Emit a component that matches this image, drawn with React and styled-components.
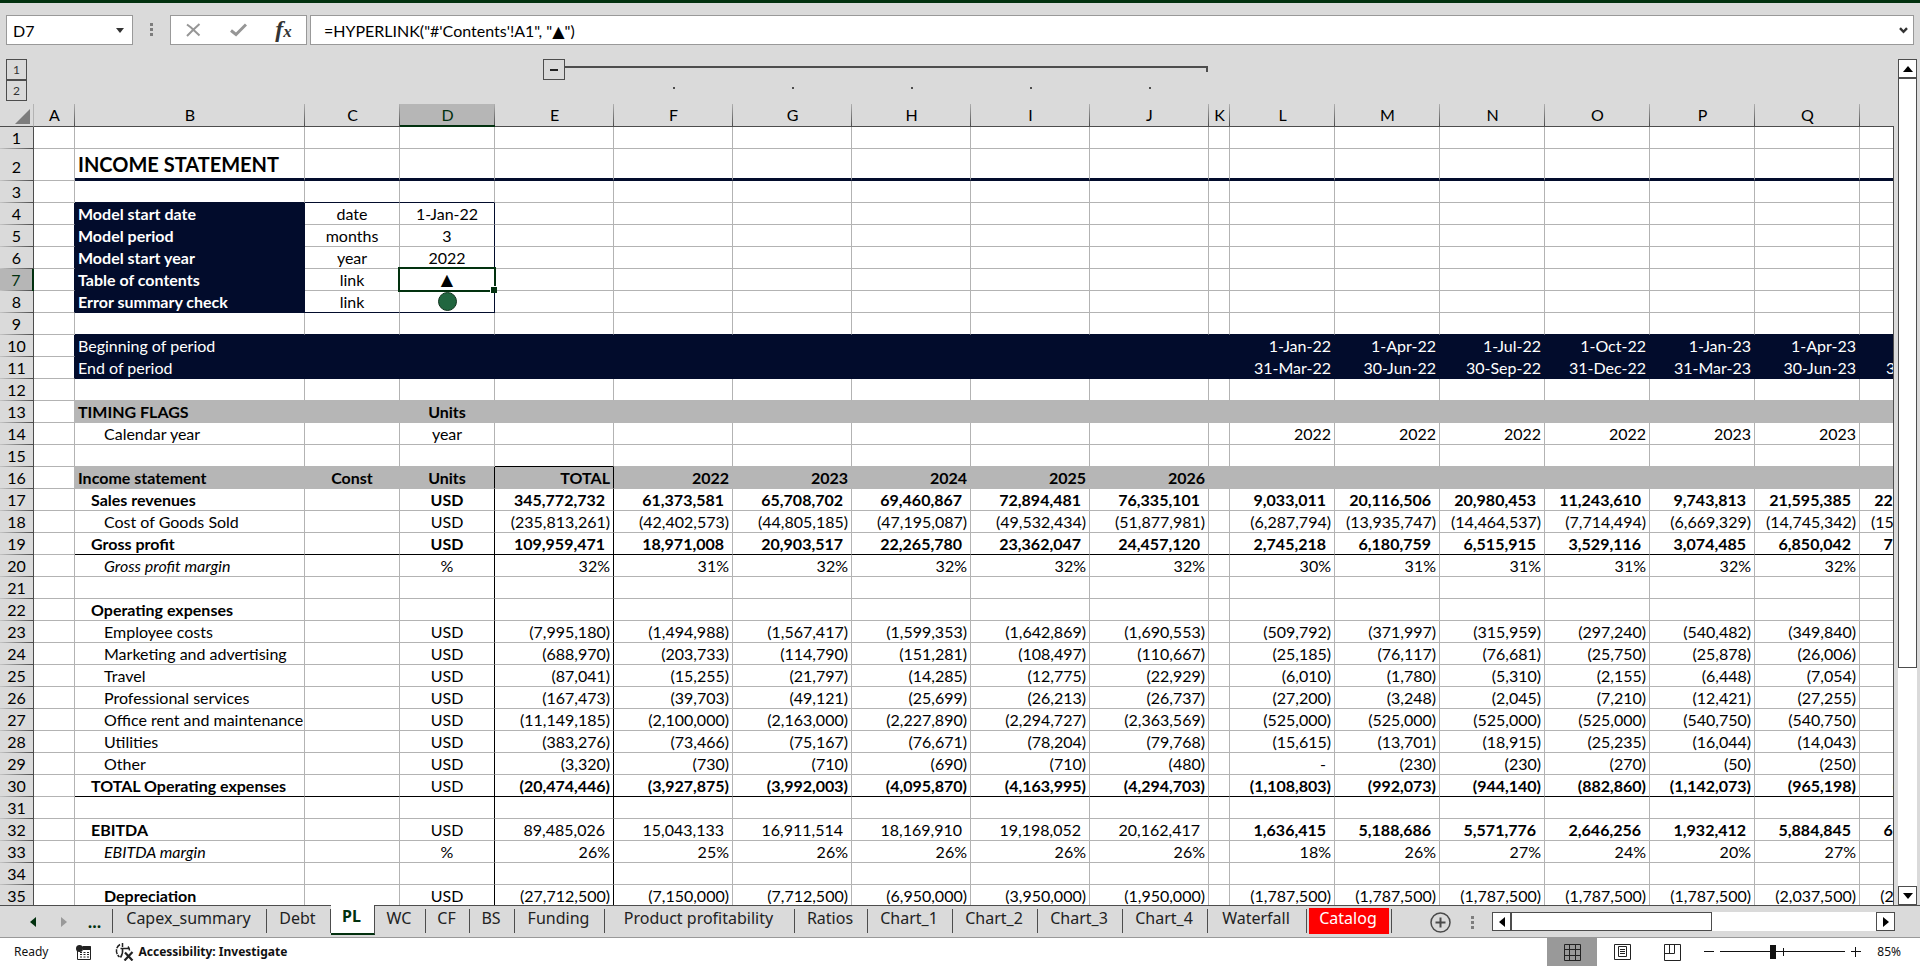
import styled, { createGlobalStyle, css } from "styled-components";

const navy = "#020c2c";
const green = "#02310f";
const chrome = "#dadada";
const band = "#b6b6b6";
const line = "#b3b3b3";
const edge = "#4d4d4d";

const columns = [
  { id: "A", width: 41 },
  { id: "B", width: 230 },
  { id: "C", width: 95 },
  { id: "D", width: 95 },
  { id: "E", width: 119 },
  { id: "F", width: 119 },
  { id: "G", width: 119 },
  { id: "H", width: 119 },
  { id: "I", width: 119 },
  { id: "J", width: 119 },
  { id: "K", width: 21 },
  { id: "L", width: 105 },
  { id: "M", width: 105 },
  { id: "N", width: 105 },
  { id: "O", width: 105 },
  { id: "P", width: 105 },
  { id: "Q", width: 105 },
  { id: "R", width: 105 },
];
const headWidth = 34;
const tableWidth = columns.reduce((sum, c) => sum + c.width, headWidth);

const yearColumns = ["E", "F", "G", "H", "I", "J"];
const quarterColumns = ["L", "M", "N", "O", "P", "Q", "R"];

const rows = {
  2: { label: "INCOME STATEMENT", kind: "title" },
  4: { label: "Model start date", kind: "info", constant: "date", unit: "1-Jan-22" },
  5: { label: "Model period", kind: "info", constant: "months", unit: "3" },
  6: { label: "Model start year", kind: "info", constant: "year", unit: "2022" },
  7: { label: "Table of contents", kind: "info", constant: "link", unit: "contents" },
  8: { label: "Error summary check", kind: "info", constant: "link", unit: "check" },
  10: {
    label: "Beginning of period",
    kind: "period",
    quarters: "1-Jan-22 1-Apr-22 1-Jul-22 1-Oct-22 1-Jan-23 1-Apr-23 1-Jul-23",
  },
  11: {
    label: "End of period",
    kind: "period",
    quarters: "31-Mar-22 30-Jun-22 30-Sep-22 31-Dec-22 31-Mar-23 30-Jun-23 30-Sep-23",
  },
  13: { label: "TIMING FLAGS", kind: "band", unit: "Units" },
  14: {
    label: "Calendar year",
    indent: 2,
    unit: "year",
    plain: true,
    quarters: "2022 2022 2022 2022 2023 2023 2023",
  },
  16: {
    label: "Income statement",
    kind: "band",
    constant: "Const",
    unit: "Units",
    plain: true,
    years: "TOTAL 2022 2023 2024 2025 2026",
  },
  17: {
    label: "Sales revenues",
    indent: 1,
    bold: "all",
    unit: "USD",
    years: "345,772,732 61,373,581 65,708,702 69,460,867 72,894,481 76,335,101",
    quarters: "9,033,011 20,116,506 20,980,453 11,243,610 9,743,813 21,595,385 22,513,924",
  },
  18: {
    label: "Cost of Goods Sold",
    indent: 2,
    unit: "USD",
    years: "(235,813,261) (42,402,573) (44,805,185) (47,195,087) (49,532,434) (51,877,981)",
    quarters: "(6,287,794) (13,935,747) (14,464,537) (7,714,494) (6,669,329) (14,745,342) (15,306,204)",
  },
  19: {
    label: "Gross profit",
    indent: 1,
    bold: "all",
    unit: "USD",
    rule: true,
    years: "109,959,471 18,971,008 20,903,517 22,265,780 23,362,047 24,457,120",
    quarters: "2,745,218 6,180,759 6,515,915 3,529,116 3,074,485 6,850,042 7,207,720",
  },
  20: {
    label: "Gross profit margin",
    indent: 2,
    italic: true,
    unit: "%",
    years: "32% 31% 32% 32% 32% 32%",
    quarters: "30% 31% 31% 31% 32% 32% 32%",
  },
  22: { label: "Operating expenses", indent: 1, bold: "label" },
  23: {
    label: "Employee costs",
    indent: 2,
    unit: "USD",
    years: "(7,995,180) (1,494,988) (1,567,417) (1,599,353) (1,642,869) (1,690,553)",
    quarters: "(509,792) (371,997) (315,959) (297,240) (540,482) (349,840) (380,100)",
  },
  24: {
    label: "Marketing and advertising",
    indent: 2,
    unit: "USD",
    years: "(688,970) (203,733) (114,790) (151,281) (108,497) (110,667)",
    quarters: "(25,185) (76,117) (76,681) (25,750) (25,878) (26,006) (26,135)",
  },
  25: {
    label: "Travel",
    indent: 2,
    unit: "USD",
    years: "(87,041) (15,255) (21,797) (14,285) (12,775) (22,929)",
    quarters: "(6,010) (1,780) (5,310) (2,155) (6,448) (7,054) (4,210)",
  },
  26: {
    label: "Professional services",
    indent: 2,
    unit: "USD",
    years: "(167,473) (39,703) (49,121) (25,699) (26,213) (26,737)",
    quarters: "(27,200) (3,248) (2,045) (7,210) (12,421) (27,255) (2,106)",
  },
  27: {
    label: "Office rent and maintenance",
    indent: 2,
    unit: "USD",
    years: "(11,149,185) (2,100,000) (2,163,000) (2,227,890) (2,294,727) (2,363,569)",
    quarters: "(525,000) (525,000) (525,000) (525,000) (540,750) (540,750) (540,750)",
  },
  28: {
    label: "Utilities",
    indent: 2,
    unit: "USD",
    years: "(383,276) (73,466) (75,167) (76,671) (78,204) (79,768)",
    quarters: "(15,615) (13,701) (18,915) (25,235) (16,044) (14,043) (19,388)",
  },
  29: {
    label: "Other",
    indent: 2,
    unit: "USD",
    years: "(3,320) (730) (710) (690) (710) (480)",
    quarters: "- (230) (230) (270) (50) (250) (160)",
  },
  30: {
    label: "TOTAL Operating expenses",
    indent: 1,
    bold: "numbers",
    unit: "USD",
    rule: true,
    years: "(20,474,446) (3,927,875) (3,992,003) (4,095,870) (4,163,995) (4,294,703)",
    quarters: "(1,108,803) (992,073) (944,140) (882,860) (1,142,073) (965,198) (972,849)",
  },
  32: {
    label: "EBITDA",
    indent: 1,
    bold: "quarters",
    unit: "USD",
    years: "89,485,026 15,043,133 16,911,514 18,169,910 19,198,052 20,162,417",
    quarters: "1,636,415 5,188,686 5,571,776 2,646,256 1,932,412 5,884,845 6,234,871",
  },
  33: {
    label: "EBITDA margin",
    indent: 2,
    italic: true,
    unit: "%",
    years: "26% 25% 26% 26% 26% 26%",
    quarters: "18% 26% 27% 24% 20% 27% 28%",
  },
  35: {
    label: "Depreciation",
    indent: 2,
    bold: "label",
    unit: "USD",
    years: "(27,712,500) (7,150,000) (7,712,500) (6,950,000) (3,950,000) (1,950,000)",
    quarters: "(1,787,500) (1,787,500) (1,787,500) (1,787,500) (1,787,500) (2,037,500) (2,037,500)",
  },
};
const rowNumbers = Array.from({ length: 35 }, (_, i) => i + 1);

const tabs = [
  { name: "Capex_summary", width: 154 },
  { name: "Debt", width: 64 },
  { name: "PL", width: 44, active: true },
  { name: "WC", width: 51 },
  { name: "CF", width: 44 },
  { name: "BS", width: 45 },
  { name: "Funding", width: 90 },
  { name: "Product profitability", width: 190 },
  { name: "Ratios", width: 73 },
  { name: "Chart_1", width: 85 },
  { name: "Chart_2", width: 85 },
  { name: "Chart_3", width: 85 },
  { name: "Chart_4", width: 85 },
  { name: "Waterfall", width: 99 },
  { name: "Catalog", width: 85, red: true },
];

const textOf = (row, col) => {
  if (!row) return "";
  if (col === "B") return row.label;
  if (col === "C") return row.constant;
  if (col === "D") return row.unit;
  const y = yearColumns.indexOf(col);
  if (y >= 0) return row.years?.split(" ")[y];
  const q = quarterColumns.indexOf(col);
  if (q >= 0) return row.quarters?.split(" ")[q];
  return "";
};

const isBold = (row, col) => {
  if (!row) return false;
  if (row.kind === "title" || row.kind === "band") return true;
  if (row.kind === "info") return col === "B";
  if (col === "B") return Boolean(row.bold);
  if (row.bold === "all") return true;
  if (row.bold === "numbers") return col !== "D";
  if (row.bold === "quarters") return quarterColumns.includes(col);
  return false;
};

const fillOf = (n, col) => {
  if (col === "A") return null;
  const kind = rows[n]?.kind;
  if (kind === "period") return navy;
  if (kind === "band") return band;
  if (kind === "info" && col === "B") return navy;
  return null;
};

// Bottom and right lines of a cell: a box or a rule wins over a fill, a fill over the grid
const bottomOf = (n, col) => {
  if (col === "A") return line;
  if (rows[n]?.rule) return "#000";
  if (n === 15 && col === "E") return "#000";
  if ((n === 3 || n === 8) && ["B", "C", "D"].includes(col)) return navy;
  return fillOf(n, col) || fillOf(n + 1, col) || line;
};

const rightOf = (n, col) => {
  if (n >= 16 && (col === "D" || col === "E")) return "#000";
  if (n >= 4 && n <= 8 && col === "D") return navy;
  if (col === "A") return fillOf(n, "B") || line;
  return fillOf(n, col) || line;
};

const padOf = (row, col, text) => {
  if (col === "B") return [3, 16, 29][row?.indent || 0];
  if (row?.plain || row?.kind === "period" || !text) return 3;
  return text.endsWith(")") || text.endsWith("%") ? 3 : 8;
};

const App = () => (
  <>
    <GlobalStyle />
    <Window>
      <TitleEdge />
      <FormulaBar>
        <NameBox>
          <NameInput aria-label="Name box" defaultValue="D7" />
          <PlainButton aria-label="Choose a name">
            <Caret viewBox="0 0 8 5"><path d="M0 0h8L4 5z" /></Caret>
          </PlainButton>
        </NameBox>
        <Grip />
        <EntryButtons>
          <PlainButton aria-label="Cancel">
            <svg width="15" height="14" viewBox="0 0 15 14" fill="none" stroke="#969696" strokeWidth="2">
              <path d="M1 1.500l4 3 8.500 8M13.500 1L7 7l-6 6" />
            </svg>
          </PlainButton>
          <PlainButton aria-label="Enter">
            <svg width="17" height="14" viewBox="0 0 17 14" fill="none" stroke="#969696" strokeWidth="3">
              <path d="M1 7.500l5 4L16 1.500" />
            </svg>
          </PlainButton>
          <FxButton aria-label="Insert function">f<small>x</small></FxButton>
        </EntryButtons>
        <FormulaBox>
          <FormulaInput aria-label="Formula" defaultValue={`=HYPERLINK("#'Contents'!A1", "▲")`} />
          <PlainButton aria-label="Expand formula bar">
            <svg width="9" height="7" viewBox="0 0 9 7" fill="none" stroke="#333" strokeWidth="2.400">
              <path d="M1 1.200l3.500 3.600L8 1.200" />
            </svg>
          </PlainButton>
        </FormulaBox>
      </FormulaBar>

      <Workspace>
        <Sheet>
          <Outline>
            <Levels>
              <LevelButton>1</LevelButton>
              <LevelButton>2</LevelButton>
            </Levels>
            <GroupBar>
              <CollapseButton aria-label="Collapse group" />
              <GroupLine />
            </GroupBar>
            <GroupDots>
              {yearColumns.slice(1).map((id) => (
                <GroupDot key={id} />
              ))}
            </GroupDots>
          </Outline>
          <Viewport>
            <Table>
              <colgroup>
                <Column $width={headWidth} />
                {columns.map((c) => (
                  <Column key={c.id} $width={c.width} />
                ))}
              </colgroup>
              <thead>
                <tr>
                  <Corner aria-label="Select all">
                    <svg width="15" height="15" viewBox="0 0 15 15"><path d="M15 0v15H0z" fill="#7d7d7d" /></svg>
                  </Corner>
                  {columns.map((c) => (
                    <ColumnHead key={c.id} scope="col" $selected={c.id === "D"}>
                      {c.id}
                    </ColumnHead>
                  ))}
                </tr>
              </thead>
              <tbody>
                {rowNumbers.map((n) => (
                  <SheetRow key={n} n={n} row={rows[n]} />
                ))}
              </tbody>
            </Table>
          </Viewport>
        </Sheet>
        <VerticalScroll>
          <ArrowButton aria-label="Scroll up">
            <svg width="10" height="6" viewBox="0 0 10 6"><path d="M5 0l5 6H0z" /></svg>
          </ArrowButton>
          <VerticalTrack>
            <VerticalThumb />
          </VerticalTrack>
          <ArrowButton aria-label="Scroll down">
            <svg width="10" height="6" viewBox="0 0 10 6"><path d="M0 0h10L5 6z" /></svg>
          </ArrowButton>
        </VerticalScroll>
      </Workspace>

      <TabBar>
        <TabNav>
          <PlainButton aria-label="Previous sheets">
            <svg width="6" height="10" viewBox="0 0 6 10"><path d="M6 0v10L0 5z" fill={green} /></svg>
          </PlainButton>
          <PlainButton aria-label="Next sheets">
            <svg width="6" height="10" viewBox="0 0 6 10"><path d="M0 0v10l6-5z" fill="#999" /></svg>
          </PlainButton>
          <MoreButton aria-label="More sheets">...</MoreButton>
        </TabNav>
        <TabList>
          {tabs.map((t) => (
            <TabItem key={t.name} $width={t.width} $active={t.active}>
              <TabButton $active={t.active} $red={t.red}>{t.name}</TabButton>
            </TabItem>
          ))}
        </TabList>
        <AddButton aria-label="New sheet">
          <svg width="21" height="21" viewBox="0 0 21 21" fill="none" stroke="#4a4a4a">
            <circle cx="10.500" cy="10.500" r="9.500" strokeWidth="1.500" />
            <path d="M10.500 5.500v10M5.500 10.500h10" strokeWidth="2" />
          </svg>
        </AddButton>
        <Grip $low />
        <HorizontalScroll>
          <ArrowButton aria-label="Scroll left">
            <svg width="6" height="10" viewBox="0 0 6 10"><path d="M6 0v10L0 5z" /></svg>
          </ArrowButton>
          <HorizontalTrack>
            <HorizontalThumb />
          </HorizontalTrack>
          <ArrowButton aria-label="Scroll right">
            <svg width="6" height="10" viewBox="0 0 6 10"><path d="M0 0v10l6-5z" /></svg>
          </ArrowButton>
        </HorizontalScroll>
      </TabBar>

      <StatusBar>
        <StatusText>Ready</StatusText>
        <PlainButton aria-label="Record macro">
          <svg width="16" height="15" viewBox="0 0 16 15" fill="none" stroke="#222">
            <path d="M1.500 6v8.500h13v-13H7" />
            <path d="M6 2.500h9M7 4h8" strokeWidth="2" />
            <path d="M4 7.500h2m1.500 0h2m1.500 0h2M4 9.500h2m1.500 0h2m1.500 0h2M4 12h2m1.500 0h2m1.500 0h2" />
            <circle cx="3.500" cy="3.500" r="3.500" fill="#222" stroke="none" />
          </svg>
        </PlainButton>
        <AccessibilityButton>
          <svg width="20" height="18" viewBox="0 0 20 18" fill="none" stroke="#222" strokeWidth="1.500">
            <path d="M5 1.500C.5 4 .2 10.500 4.500 14" strokeDasharray="5 1" />
            <path d="M7.500 0v4M5.500 5.500h8M7.500 5.500c.5 3 0 6-2 9M13 3.500c1 1 1.500 2 1.500 4" />
            <path d="M10 9.500l7.500 8M17.500 9l-8 8.500" strokeWidth="2.200" />
          </svg>
          Accessibility: Investigate
        </AccessibilityButton>
        <ViewButtons>
          <ViewButton $active aria-label="Normal">
            <svg width="17" height="17" viewBox="0 0 17 17" fill="none" stroke="#222">
              <path d="M.5.5h16v16H.5zM5.500.5v16M11.500.5v16M.5 5.500h16M.5 11.500h16" />
            </svg>
          </ViewButton>
          <ViewButton aria-label="Page layout">
            <svg width="17" height="16" viewBox="0 0 17 16" fill="none" stroke="#222">
              <path d="M.5.5h16v15H.5zM4.500 2.500h8v10h-8zM6 5.500h5M6 7.500h5M6 9.500h5" />
            </svg>
          </ViewButton>
          <ViewButton aria-label="Page break preview">
            <svg width="17" height="17" viewBox="0 0 17 17" fill="none" stroke="#222">
              <path d="M.5.5h16v16H.5zM.5 9.500h10v-9M5.500.5v9" />
            </svg>
          </ViewButton>
        </ViewButtons>
        <PlainButton aria-label="Zoom out">
          <svg width="10" height="10" viewBox="0 0 10 10" stroke="#111"><path d="M0 4.500h10" /></svg>
        </PlainButton>
        <ZoomSlider type="range" aria-label="Zoom" min="10" max="190" defaultValue="85" />
        <PlainButton aria-label="Zoom in">
          <svg width="10" height="10" viewBox="0 0 10 10" stroke="#111"><path d="M0 4.500h10M4.500 0v10" /></svg>
        </PlainButton>
        <ZoomValue>85%</ZoomValue>
      </StatusBar>
    </Window>
  </>
);

const SheetRow = ({ n, row }) => (
  <tr>
    <RowHead scope="row" $selected={n === 7} $tall={n === 2}>{n}</RowHead>
    {columns.map(({ id }) => {
      const text = textOf(row, id);
      return (
        <Cell
          key={id}
          $align={id === "B" ? "left" : id === "C" || id === "D" ? "center" : "right"}
          $pad={padOf(row, id, text)}
          $bold={isBold(row, id)}
          $italic={row?.italic && id === "B"}
          $fill={fillOf(n, id)}
          $bottom={bottomOf(n, id)}
          $right={rightOf(n, id)}
          $title={n === 2 && id !== "A"}
        >
          <CellContent text={text} />
        </Cell>
      );
    })}
  </tr>
);

const CellContent = ({ text }) => {
  if (text === "contents") {
    return (
      <>
        <CellLink href="#Contents">▲</CellLink>
        <Selection />
      </>
    );
  }
  if (text === "check") {
    return (
      <CellLink href="#Checks" aria-label="Error summary check">
        <svg width="19" height="19" viewBox="0 0 19 19">
          <circle cx="9.500" cy="9.500" r="9" fill="#21663f" stroke="#12351f" />
        </svg>
      </CellLink>
    );
  }
  return text || null;
};

export default App;

const GlobalStyle = createGlobalStyle`
  * {
    box-sizing: border-box;
  }
  body {
    margin: 0;
    background: ${chrome};
    color: #000;
    font: 16px/19px Lato, "DejaVu Sans", sans-serif;
  }
  button, input {
    font: inherit;
    color: inherit;
  }
  svg {
    display: block;
  }
`;

const Window = styled.div`
  display: flex;
  flex-direction: column;
  height: 100vh;
  overflow: hidden;
`;

const TitleEdge = styled.div`
  flex: none;
  height: 3px;
  background: ${green};
`;

const PlainButton = styled.button`
  display: flex;
  align-items: center;
  justify-content: center;
  padding: 0;
  border: 0;
  background: none;
`;

/* Formula bar */
const FormulaBar = styled.div`
  display: flex;
  flex: none;
  height: 42px;
  padding: 12px 6px 0;
`;

const boxed = css`
  display: flex;
  height: 30px;
  border: 1px solid #999;
  background: #fff;
`;

const NameBox = styled.div`
  ${boxed}
  width: 127px;
  padding: 0 8px 0 6px;
`;

const NameInput = styled.input`
  flex: 1;
  min-width: 0;
  padding: 0;
  border: 0;
  background: none;
`;

const Caret = styled.svg`
  width: 8px;
  height: 5px;
  fill: #333;
`;

const Grip = styled.span`
  flex: none;
  width: 3px;
  height: 13px;
  margin: ${(p) => (p.$low ? "10px 18px 0 auto" : "8px 17px 0")};
  background: repeating-linear-gradient(#7d7d7d 0 3px, transparent 3px 5px);
`;

const EntryButtons = styled.div`
  ${boxed}
  width: 137px;
  margin-right: 3px;

  button {
    flex: 1;
  }
`;

const FxButton = styled(PlainButton)`
  align-items: baseline;
  font: italic bold 24px/26px "Liberation Serif", serif;
  color: #333;

  small {
    font-size: 17px;
  }
`;

const FormulaBox = styled.div`
  ${boxed}
  flex: 1;
  padding: 0 5px 0 13px;
`;

const FormulaInput = styled.input`
  flex: 1;
  padding: 0;
  border: 0;
  background: none;
  outline: none;
`;

/* Sheet */
const Workspace = styled.div`
  display: flex;
  flex: 1;
  gap: 4px;
  min-height: 0;
  padding-right: 3px;
`;

const Sheet = styled.div`
  display: flex;
  flex: 1;
  flex-direction: column;
  min-width: 0;
  overflow: hidden;
`;

const Outline = styled.div`
  display: grid;
  flex: none;
  grid-template-columns: ${headWidth}px ${columns.map((c) => `${c.width}px`).join(" ")};
  grid-template-rows: 21px 24px;
  padding-top: 14px;
`;

const Levels = styled.div`
  grid-area: 1 / 1 / 3 / 2;
  padding-left: 6px;
`;

const LevelButton = styled.button`
  display: block;
  width: 21px;
  height: 21px;
  padding: 0;
  border: 1px solid ${edge};
  background: ${chrome};
  color: #333;
  font-size: 12px;
`;

const GroupBar = styled.div`
  display: flex;
  grid-area: 1 / 6 / 2 / 12;
  padding: 0 1px 0 48px;
`;

const CollapseButton = styled.button`
  display: flex;
  align-items: center;
  justify-content: center;
  width: 22px;
  height: 21px;
  padding: 0;
  border: 1px solid ${edge};
  background: ${chrome};

  &::before {
    content: "";
    width: 8px;
    height: 2px;
    background: #222;
  }
`;

const GroupLine = styled.span`
  flex: 1;
  height: 6px;
  margin-top: 7px;
  border: solid ${edge};
  border-width: 2px 2px 0 0;
`;

const GroupDots = styled.div`
  display: flex;
  grid-area: 2 / 7 / 3 / 12;
  justify-content: space-around;
  padding-top: 7px;
`;

const GroupDot = styled.span`
  width: 2px;
  height: 2px;
  background: ${edge};
`;

const Viewport = styled.div`
  position: relative;
  flex: 1;
  min-height: 0;
  overflow: hidden;

  &::after {
    content: "";
    position: absolute;
    top: 22px;
    right: 0;
    bottom: 0;
    width: 1px;
    background: ${edge};
  }
`;

const Table = styled.table`
  width: ${tableWidth}px;
  table-layout: fixed;
  border-spacing: 0;
`;

const Column = styled.col`
  width: ${(p) => p.$width}px;
`;

const Corner = styled.td`
  height: 23px;
  padding: 4px 3px 2px 15px;
  border-right: 1px solid ${line};
  border-bottom: 1px solid ${edge};
`;

const ColumnHead = styled.th`
  height: 23px;
  padding: 1px 1px 0;
  border-bottom: ${(p) => (p.$selected ? `2px solid ${green}` : `1px solid ${edge}`)};
  background: linear-gradient(#b0b0b0, ${edge}) right / 1px 100% no-repeat ${(p) => (p.$selected ? band : chrome)};
  color: ${(p) => (p.$selected ? green : "#000")};
  font-weight: normal;
  vertical-align: top;
`;

const RowHead = styled.th`
  height: ${(p) => (p.$tall ? 32 : 22)}px;
  padding: ${(p) => (p.$tall ? "0 0 5px" : "1px 0 0")};
  border-right: ${(p) => (p.$selected ? `2px solid ${green}` : `1px solid ${edge}`)};
  background: linear-gradient(90deg, #c4c4c4, ${edge}) bottom / 100% 1px no-repeat ${(p) => (p.$selected ? band : chrome)};
  color: ${(p) => (p.$selected ? green : "#000")};
  font-weight: normal;
  vertical-align: ${(p) => (p.$tall ? "bottom" : "top")};
`;

const Cell = styled.td`
  position: relative;
  height: 22px;
  padding: 1px ${(p) => (p.$align === "right" ? p.$pad : 0)}px 0 ${(p) => (p.$align === "left" ? p.$pad : 0)}px;
  border-right: 1px solid ${(p) => p.$right};
  border-bottom: 1px solid ${(p) => p.$bottom};
  background: ${(p) => p.$fill || "#fff"};
  color: ${(p) => (p.$fill === navy ? "#fff" : "#000")};
  font-weight: ${(p) => (p.$bold ? 700 : 400)};
  font-style: ${(p) => (p.$italic ? "italic" : "normal")};
  text-align: ${(p) => p.$align};
  vertical-align: top;
  white-space: nowrap;

  ${(p) =>
    p.$title &&
    css`
      padding-bottom: 2px;
      border-bottom: 3px solid ${navy};
      font-size: 20px;
      line-height: 24px;
      vertical-align: bottom;
    `}
`;

const CellLink = styled.a`
  display: flex;
  justify-content: center;
  height: 19px;
  color: #000;
  font-family: "DejaVu Sans", sans-serif;
  text-decoration: none;

  svg {
    flex: none;
  }
`;

const Selection = styled.span`
  position: absolute;
  inset: -2px;
  z-index: 1;
  border: 2px solid ${green};

  &::after {
    content: "";
    position: absolute;
    right: -3px;
    bottom: -3px;
    width: 6px;
    height: 6px;
    border: solid #fff;
    border-width: 1px 0 0 1px;
    background: ${green};
  }
`;

/* Scroll bars */
const VerticalScroll = styled.div`
  display: flex;
  flex: none;
  flex-direction: column;
  width: 19px;
  padding-top: 14px;
`;

const ArrowButton = styled.button`
  display: flex;
  flex: none;
  align-items: center;
  justify-content: center;
  width: 19px;
  height: 19px;
  padding: 0;
  border: 1px solid ${edge};
  background: #fff;
`;

const VerticalTrack = styled.div`
  flex: 1;
  background: #fff;
`;

const VerticalThumb = styled.div`
  height: 73%;
  border: 1px solid ${edge};
  background: #fff;
`;

/* Sheet tabs */
const TabBar = styled.div`
  display: flex;
  flex: none;
  height: 33px;
  border-top: 1px solid ${edge};
  border-bottom: 1px solid #999;
`;

const TabNav = styled.div`
  display: flex;
  flex: none;
  width: 113px;
  height: 24px;
  margin-top: 3px;
  padding-left: 17px;
  border-right: 1px solid ${edge};
  font-family: "Noto Sans", sans-serif;

  button {
    width: 31px;
    height: 26px;
  }
`;

const MoreButton = styled(PlainButton)`
  color: ${green};
  font-weight: bold;
`;

const TabList = styled.ul`
  display: flex;
  min-width: 0;
  margin: 0;
  padding: 0;
  list-style: none;
`;

const TabItem = styled.li`
  display: flex;
  flex: none;
  align-items: center;
  width: ${(p) => p.$width}px;
  height: 24px;
  margin-top: 3px;
  border-right: 1px solid ${edge};

  ${(p) =>
    p.$active &&
    css`
      height: 30px;
      margin-top: -1px;
      background: #fff;
      border-bottom: 2px solid ${green};
    `}
`;

const TabButton = styled.button`
  flex: 1;
  height: 26px;
  margin: 0 2px;
  padding: 0 2px 6px 0;
  border: 0;
  background: ${(p) => (p.$red ? "#f00" : "none")};
  color: ${(p) => (p.$red ? "#fff" : p.$active ? green : "#222")};
  font: ${(p) => (p.$active ? "bold" : "normal")} 16px/20px "Noto Sans", sans-serif;
  white-space: nowrap;
`;

const AddButton = styled(PlainButton)`
  flex: none;
  width: 21px;
  height: 21px;
  margin: 6px 0 0 38px;
`;

const HorizontalScroll = styled.div`
  display: flex;
  flex: none;
  width: 403px;
  height: 19px;
  margin: 6px 25px 0 0;
`;

const HorizontalTrack = styled.div`
  flex: 1;
  background: #fff;
`;

const HorizontalThumb = styled.div`
  width: 55%;
  height: 100%;
  border: 1px solid ${edge};
`;

/* Status bar */
const StatusBar = styled.div`
  display: flex;
  flex: none;
  align-items: center;
  height: 28px;
  padding: 0 19px 0 14px;
  background: #fff;
  color: #111;
  font: 12px/16px "Noto Sans", sans-serif;
`;

const StatusText = styled.span`
  margin-right: 28px;
`;

const AccessibilityButton = styled(PlainButton)`
  gap: 3px;
  margin: 0 auto 0 23px;
  font-weight: bold;
`;

const ViewButtons = styled.div`
  display: flex;
  align-self: stretch;
  margin-right: 7px;
`;

const ViewButton = styled(PlainButton)`
  width: 50px;
  background: ${(p) => (p.$active ? "#999" : "none")};
`;

const ZoomSlider = styled.input`
  width: 125px;
  height: 16px;
  margin: 0 6px;
  appearance: none;
  background:
    linear-gradient(#111, #111) 63px 4px / 1px 8px no-repeat,
    linear-gradient(#111, #111) 0 7px / 100% 1px no-repeat;

  &::-webkit-slider-thumb {
    appearance: none;
    width: 6px;
    height: 14px;
    background: #111;
  }
`;

const ZoomValue = styled.span`
  margin-left: 16px;
`;
